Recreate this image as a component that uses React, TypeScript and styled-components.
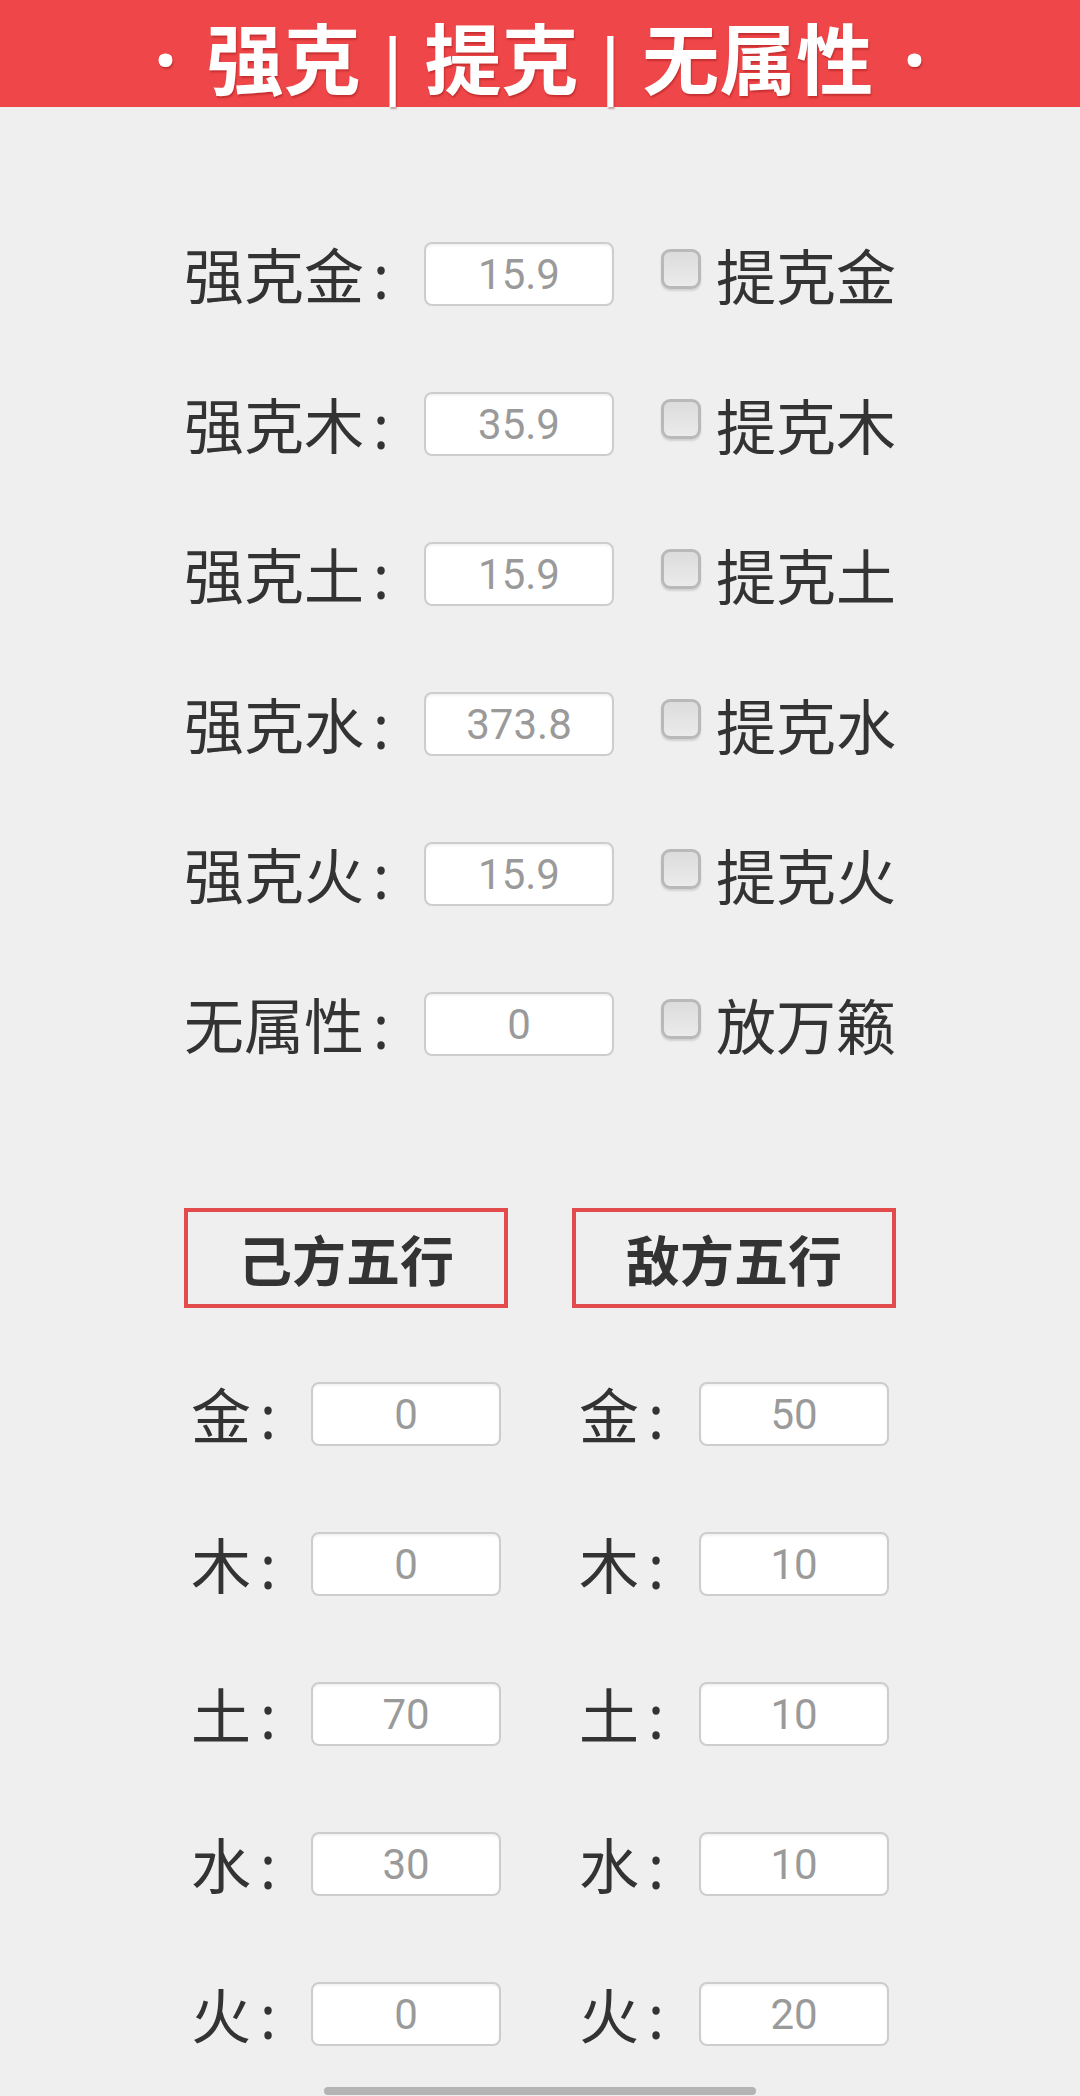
import React from 'react';
import styled, { createGlobalStyle } from 'styled-components';

const GlobalStyle = createGlobalStyle`
  html, body {
    margin: 0;
    padding: 0;
    background: #efefef;
  }
  body {
    font-family: 'Noto Sans CJK SC', 'Noto Sans', sans-serif;
    color: #333;
  }
`;

const restraints = [
  { name: '强克金', value: '15.9', toggle: '提克金' },
  { name: '强克木', value: '35.9', toggle: '提克木' },
  { name: '强克土', value: '15.9', toggle: '提克土' },
  { name: '强克水', value: '373.8', toggle: '提克水' },
  { name: '强克火', value: '15.9', toggle: '提克火' },
  { name: '无属性', value: '0', toggle: '放万籁' },
];

const elements = ['金', '木', '土', '水', '火'];
const ownValues = ['0', '0', '70', '30', '0'];
const enemyValues = ['50', '10', '10', '10', '20'];

const App = () => {
  return (
    <Page>
      <GlobalStyle />
      <Header>
        <Title>
          <Dot>·</Dot>强克<Bar>|</Bar>提克<Bar>|</Bar>无属性<Dot>·</Dot>
        </Title>
      </Header>

      <Content>
        <RestraintList>
          {restraints.map(r => (
            <Row key={r.name}>
              <Label $chars={4}>
                {r.name}
                <Colon>:</Colon>
              </Label>
              <NumberInput defaultValue={r.value} readOnly />
              <Toggle>
                <CheckBox type='checkbox' />
                <ToggleText>{r.toggle}</ToggleText>
              </Toggle>
            </Row>
          ))}
        </RestraintList>

        <Columns>
          <Column>
            <SideTitle>己方五行</SideTitle>
            {elements.map((el, i) => (
              <Row key={el} $center>
                <Label $chars={2}>
                  {el}
                  <Colon>:</Colon>
                </Label>
                <NumberInput defaultValue={ownValues[i]} readOnly />
              </Row>
            ))}
          </Column>
          <Column>
            <SideTitle>敌方五行</SideTitle>
            {elements.map((el, i) => (
              <Row key={el} $center>
                <Label $chars={2}>
                  {el}
                  <Colon>:</Colon>
                </Label>
                <NumberInput defaultValue={enemyValues[i]} readOnly />
              </Row>
            ))}
          </Column>
        </Columns>
      </Content>

      <HomeBar />
    </Page>
  );
};

const Page = styled.div`
  width: 1080px;
  min-height: 2096px;
  background: #efefef;
`;

const Header = styled.header`
  height: 107px;
  background: #ef4749;
  text-align: center;
`;

const Title = styled.h1`
  margin: 0;
  font-size: 77px;
  font-weight: 700;
  line-height: 112px;
  color: #fff;
  white-space: pre;
  text-shadow: 1px 2px 2px rgba(120, 0, 0, 0.35);
`;

const Dot = styled.span`
  font-family: 'Noto Sans', sans-serif;
  font-weight: 700;
  font-size: 80px;
  line-height: 1;
  margin: 0 30px;
`;

const Bar = styled.span`
  font-family: 'Liberation Sans', sans-serif;
  font-weight: 400;
  font-size: 76px;
  line-height: 1;
  vertical-align: -2px;
  margin: 0 22px;
`;

const Content = styled.main`
  width: 712px;
  margin: 0 auto;
  padding-top: 92px;
`;

const RestraintList = styled.section`
  display: flex;
  flex-direction: column;
`;

const Row = styled.div<{ $center?: boolean }>`
  height: 150px;
  display: flex;
  align-items: center;
  justify-content: ${p => (p.$center ? 'center' : 'flex-start')};
`;

const Label = styled.span<{ $chars: number }>`
  width: ${p => p.$chars * 60}px;
  flex-shrink: 0;
  font-size: 60px;
  line-height: 1.2;
  color: #333;
  white-space: nowrap;
`;

const Colon = styled.span`
  font-family: 'Noto Sans', sans-serif;
  margin-left: 9px;
`;

const NumberInput = styled.input`
  width: 190px;
  height: 64px;
  box-sizing: border-box;
  flex-shrink: 0;
  border: 2px solid #cdcdcd;
  border-radius: 8px;
  background: #fff;
  box-shadow: inset 0 2px 2px rgba(0, 0, 0, 0.05);
  text-align: center;
  font-family: Roboto, 'Liberation Sans', sans-serif;
  font-weight: 400;
  font-size: 42px;
  color: #9a9a9a;
  outline: none;
  padding: 0;
`;

const Toggle = styled.label`
  display: flex;
  align-items: center;
  flex-shrink: 0;
  margin-left: 47px;
`;

const CheckBox = styled.input`
  appearance: none;
  -webkit-appearance: none;
  width: 40px;
  height: 40px;
  margin: 0 15px 10px 0;
  box-sizing: border-box;
  border: 3px solid #b9b9b9;
  border-radius: 9px;
  background: linear-gradient(#dcdcdc, #ebebeb);
  box-shadow: 0 2px 2px rgba(0, 0, 0, 0.12);
`;

const ToggleText = styled.span`
  font-size: 60px;
  line-height: 1.2;
  color: #333;
  white-space: nowrap;
`;

const Columns = styled.section`
  display: grid;
  grid-template-columns: 324px 324px;
  justify-content: space-between;
  margin-top: 109px;
`;

const Column = styled.div`
  display: flex;
  flex-direction: column;
`;

const SideTitle = styled.h2`
  margin: 0 0 31px;
  height: 100px;
  box-sizing: border-box;
  border: 4px solid #e24a4c;
  display: flex;
  align-items: center;
  justify-content: center;
  font-size: 54px;
  font-weight: 700;
  color: #333;
`;

const HomeBar = styled.div`
  position: fixed;
  left: 324px;
  bottom: 1px;
  width: 432px;
  height: 8px;
  border-radius: 4px;
  background: #b4b4b4;
`;

export default App;
